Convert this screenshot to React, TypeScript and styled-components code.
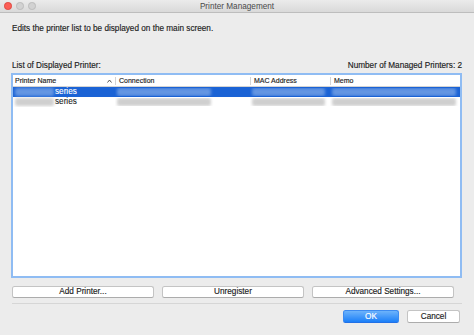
import styled, { createGlobalStyle } from "styled-components";

const GlobalStyle = createGlobalStyle`
  html, body {
    margin: 0;
    padding: 0;
    background: #ececec;
  }
  body {
    font-family: "Liberation Sans", Arial, sans-serif;
    -webkit-font-smoothing: antialiased;
  }
`;

const Window = styled.div`
  width: 474px;
  height: 335px;
  background: #ececec;
  display: flex;
  flex-direction: column;
  overflow: hidden;
  color: #1c1c1c;
  font-size: 8.2px;
`;

const TitleBar = styled.div`
  height: 12px;
  border-bottom: 1px solid #bdbdbd;
  background: linear-gradient(#ebebeb, #d9d9d9);
  display: flex;
  align-items: center;
  justify-content: center;
  position: relative;
  color: #4a4a4a;
  font-size: 8.2px;
`;

const Lights = styled.div`
  position: absolute;
  left: 4px;
  top: 2px;
  display: flex;
  gap: 4.5px;
`;

const Light = styled.span<{ $color: string; $edge: string }>`
  width: 7.5px;
  height: 7.5px;
  border-radius: 50%;
  box-sizing: border-box;
  background: ${p => p.$color};
  border: 0.5px solid ${p => p.$edge};
`;

const Content = styled.div`
  padding: 0 12px;
  display: flex;
  flex-direction: column;
`;

const Description = styled.div`
  margin-top: 11px;
  line-height: 10px;
  height: 10px;
  -webkit-text-stroke: 0.15px #1c1c1c;
`;

const ListHeader = styled.div`
  margin-top: 27px;
  height: 10px;
  line-height: 10px;
  display: flex;
  justify-content: space-between;
  -webkit-text-stroke: 0.15px #1c1c1c;
`;

const TableBox = styled.div`
  margin-top: 2px;
  margin-left: -1px;
  height: 205px;
  box-sizing: border-box;
  border: 2px solid #8fbcf3;
  background: #fff;
  display: flex;
  flex-direction: column;
`;

const HeadRow = styled.div`
  height: 11px;
  display: grid;
  grid-template-columns: 102px 135px 80px 1fr;
  border-bottom: 1px solid #d4d4d4;
  font-size: 7px;
  line-height: 11px;
  -webkit-text-stroke: 0.15px #222;
`;

const HeadCell = styled.div<{ $first?: boolean }>`
  position: relative;
  padding-left: ${p => (p.$first ? "2px" : "3px")};
  border-left: ${p => (p.$first ? "none" : "1px solid #d4d4d4")};
  white-space: nowrap;
  height: 8px;
  margin-top: 1.5px;
  line-height: 8px;
`;

const SortArrow = styled.svg`
  position: absolute;
  right: 3px;
  top: 2px;
`;

const Row = styled.div<{ $selected?: boolean }>`
  height: 10px;
  display: grid;
  grid-template-columns: 102px 135px 80px 1fr;
  align-items: center;
  background: ${p => (p.$selected ? "#1b63d5" : "transparent")};
  color: ${p => (p.$selected ? "#fff" : "#1c1c1c")};
  line-height: 10px;
  -webkit-text-stroke: 0.1px ${p => (p.$selected ? "#fff" : "#1c1c1c")};
`;

const Cell = styled.div`
  display: flex;
  align-items: center;
  padding-left: 2px;
  gap: 1px;
  white-space: nowrap;
  overflow: hidden;
`;

const Redacted = styled.span<{ $w: number; $selected?: boolean }>`
  display: inline-block;
  width: ${p => p.$w}px;
  height: 8px;
  border-radius: 2px;
  background: ${p => (p.$selected ? "#6496e2" : "#cfcfcf")};
  filter: blur(1.4px);
`;

const ButtonRow = styled.div`
  margin-top: 8px;
  display: flex;
  gap: 8px;
`;

const PushButton = styled.button<{ $w: number; $primary?: boolean }>`
  width: ${p => p.$w}px;
  height: ${p => (p.$primary !== undefined ? "13px" : "12px")};
  padding: 0;
  box-sizing: border-box;
  font-family: "Liberation Sans", Arial, sans-serif;
  font-size: 8.2px;
  line-height: 10px;
  border-radius: 2.5px;
  border: 1px solid ${p => (p.$primary ? "#3d8bf0" : "#c4c4c4")};
  border-bottom-color: ${p => (p.$primary ? "#2271e6" : "#acacac")};
  background: ${p => (p.$primary ? "linear-gradient(#6db3fb, #1b7ff8)" : "#fff")};
  color: ${p => (p.$primary ? "#fff" : "#1c1c1c")};
  -webkit-text-stroke: 0.15px ${p => (p.$primary ? "#fff" : "#1c1c1c")};
`;

const Separator = styled.div`
  margin-top: 5px;
  height: 1px;
  background: #d6d6d6;
`;

const Footer = styled.div`
  margin-top: 6px;
  padding-right: 2px;
  display: flex;
  justify-content: flex-end;
  gap: 8px;
`;

const rows = [
  { selected: true },
  { selected: false },
];

const App = () => {
  return (
    <>
      <GlobalStyle />
      <Window>
        <TitleBar>
          <Lights>
            <Light $color="#fc5f57" $edge="#de4a42" />
            <Light $color="#d2d2d2" $edge="#bcbcbc" />
            <Light $color="#d2d2d2" $edge="#bcbcbc" />
          </Lights>
          Printer Management
        </TitleBar>
        <Content>
          <Description>Edits the printer list to be displayed on the main screen.</Description>
          <ListHeader>
            <span>List of Displayed Printer:</span>
            <span>Number of Managed Printers: 2</span>
          </ListHeader>
          <TableBox>
            <HeadRow>
              <HeadCell $first>
                Printer Name
                <SortArrow width="5" height="4" viewBox="0 0 5 4">
                  <path d="M0.5 3.5 L2.5 1 L4.5 3.5" fill="none" stroke="#444" strokeWidth="0.9" />
                </SortArrow>
              </HeadCell>
              <HeadCell>Connection</HeadCell>
              <HeadCell>MAC Address</HeadCell>
              <HeadCell>Memo</HeadCell>
            </HeadRow>
            {rows.map((r, i) => (
              <Row key={i} $selected={r.selected}>
                <Cell>
                  <Redacted $w={39} $selected={r.selected} />
                  <span>series</span>
                </Cell>
                <Cell>
                  <Redacted $w={94} $selected={r.selected} />
                </Cell>
                <Cell>
                  <Redacted $w={73} $selected={r.selected} />
                </Cell>
                <Cell>
                  <Redacted $w={124} $selected={r.selected} />
                </Cell>
              </Row>
            ))}
          </TableBox>
          <ButtonRow>
            <PushButton $w={142}>Add Printer...</PushButton>
            <PushButton $w={142}>Unregister</PushButton>
            <PushButton $w={142}>Advanced Settings...</PushButton>
          </ButtonRow>
          <Separator />
          <Footer>
            <PushButton $w={56} $primary>OK</PushButton>
            <PushButton $w={53} $primary={false}>Cancel</PushButton>
          </Footer>
        </Content>
      </Window>
    </>
  );
};

export default App;
